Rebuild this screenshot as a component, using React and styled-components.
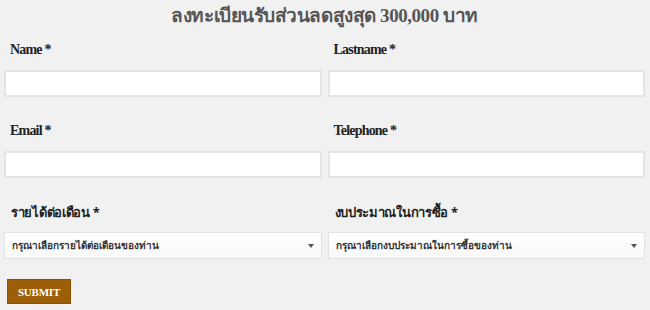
import React from "react";
import styled, { createGlobalStyle } from "styled-components";

const Global = createGlobalStyle`
  html, body { margin: 0; padding: 0; background: #f1f1f1; }
  body { font-family: "Liberation Serif", "Noto Sans Thai", serif; }
`;

const Page = styled.div`
  width: 650px;
  height: 310px;
  box-sizing: border-box;
  padding: 0 5px 0 4px;
  background: #f1f1f1;
`;

const Title = styled.h2`
  margin: 0;
  height: 31px;
  line-height: 31px;
  text-align: center;
  font-family: "Liberation Serif", serif;
  font-weight: bold;
  font-size: 19px;
  color: #555;
  letter-spacing: -0.45px;
`;

const Row = styled.div`
  display: grid;
  grid-template-columns: 1fr 1fr;
  column-gap: 6px;
  margin-top: ${(p) => p.$top}px;
`;

const Field = styled.div`
  display: flex;
  flex-direction: column;
`;

const Label = styled.label`
  display: block;
  height: 20px;
  line-height: 20px;
  margin-bottom: 10px;
  padding-left: ${(p) => (p.$thai ? 7 : 6)}px;
  font-family: ${(p) => (p.$thai ? `"Noto Sans", "Liberation Sans", sans-serif` : `"Liberation Serif", serif`)};
  font-weight: bold;
  font-size: ${(p) => (p.$thai ? 13 : 14)}px;
  color: #222;
  letter-spacing: ${(p) => (p.$thai ? "-0.3px" : "-0.8px")};
`;

const Input = styled.input`
  box-sizing: border-box;
  height: 27px;
  width: 100%;
  margin: 0;
  border: 2px solid #e4e4e4;
  background: #fff;
  outline: none;
`;

const Select = styled.div`
  position: relative;
  box-sizing: border-box;
  height: 27px;
  display: flex;
  align-items: center;
  padding-left: 7px;
  border: 1px solid #e2e2e2;
  background: linear-gradient(#ffffff, #f8f8f8);
  font-family: "Noto Sans", "Liberation Sans", sans-serif;
  font-size: 10px;
  font-weight: bold;
  color: #333;
`;

const Arrow = styled.span`
  position: absolute;
  right: 7px;
  top: 11px;
  width: 0;
  height: 0;
  border-left: 3.5px solid transparent;
  border-right: 3.5px solid transparent;
  border-top: 4px solid #555;
`;

const Submit = styled.button`
  display: block;
  margin: 20px 0 0 3px;
  width: 64px;
  height: 25px;
  padding: 0;
  border: 1px solid #8a5206;
  background: #9c5e07;
  color: #fff;
  font-family: "Liberation Serif", serif;
  font-weight: bold;
  font-size: 11px;
  letter-spacing: -0.2px;
`;

export default function App() {
  return (
    <>
      <Global />
      <Page>
        <Title>ลงทะเบียนรับส่วนลดสูงสุด 300,000 บาท</Title>
        <Row $top={9}>
          <Field>
            <Label>Name *</Label>
            <Input />
          </Field>
          <Field>
            <Label>Lastname *</Label>
            <Input />
          </Field>
        </Row>
        <Row $top={24}>
          <Field>
            <Label>Email *</Label>
            <Input />
          </Field>
          <Field>
            <Label>Telephone *</Label>
            <Input />
          </Field>
        </Row>
        <Row $top={24}>
          <Field>
            <Label $thai>รายได้ต่อเดือน *</Label>
            <Select>
              กรุณาเลือกรายได้ต่อเดือนของท่าน
              <Arrow />
            </Select>
          </Field>
          <Field>
            <Label $thai>งบประมาณในการซื้อ *</Label>
            <Select>
              กรุณาเลือกงบประมาณในการซื้อของท่าน
              <Arrow />
            </Select>
          </Field>
        </Row>
        <Submit>SUBMIT</Submit>
      </Page>
    </>
  );
}
